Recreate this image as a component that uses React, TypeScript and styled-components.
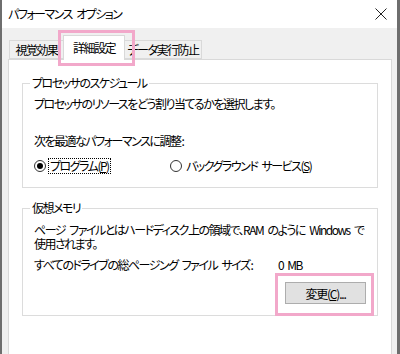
import React from 'react'
import styled, { createGlobalStyle } from 'styled-components'

const GlobalStyle = createGlobalStyle`
  body {
    margin: 0;
    font-family: "Noto Sans CJK JP", "Noto Sans", sans-serif;
    font-size: 12px;
    color: #000;
    font-feature-settings: "palt";
    letter-spacing: -1.5px;
    word-spacing: 3px;
  }
`

const Window = styled.div`
  width: 400px;
  height: 354px;
  box-sizing: border-box;
  background: #f0f0f0;
  border-left: 2px solid #6e6e6e;
  border-right: 3px solid #6e6e6e;
  display: flex;
  flex-direction: column;
  overflow: hidden;
`

const TitleBar = styled.div`
  height: 28px;
  flex: none;
  background: #fff;
  display: flex;
  align-items: center;
  justify-content: space-between;
  padding: 0 10px 0 6px;
`

const Title = styled.span`
  font-size: 12px;
  line-height: 16px;
`

const Body = styled.div`
  flex: 1;
  display: flex;
  flex-direction: column;
  padding: 7px 5px 0 6px;
`

const TabStrip = styled.div`
  display: flex;
  align-items: flex-end;
  height: 24px;
  padding-left: 1px;
  position: relative;
  z-index: 1;
`

const Tab = styled.div<{ $active?: boolean; $width: number }>`
  box-sizing: border-box;
  width: ${({ $width }) => $width}px;
  height: ${({ $active }) => ($active ? '25px' : '19px')};
  margin-bottom: ${({ $active }) => ($active ? '-1px' : '0')};
  background: ${({ $active }) => ($active ? '#fff' : '#f0f0f0')};
  border: 1px solid #d9d9d9;
  border-bottom: ${({ $active }) => ($active ? 'none' : '1px solid #d9d9d9')};
  margin-left: ${({ $active }) => ($active ? '-1px' : '0')};
  margin-right: ${({ $active }) => ($active ? '-1px' : '0')};
  display: flex;
  align-items: center;
  justify-content: center;
  line-height: 16px;
  white-space: nowrap;
  position: relative;
  ${({ $active }) =>
    $active &&
    `
    z-index: 2;
    &::after {
      content: '';
      position: absolute;
      left: -6px;
      right: -11px;
      top: -6px;
      bottom: -6px;
      border: 3px solid #f2a8ca;
    }
  `}
`

const Panel = styled.div`
  flex: 1;
  background: #fff;
  border: 1px solid #d9d9d9;
  border-bottom: none;
  padding: 15px 13px 0 13px;
`

const Group = styled.fieldset<{ $gap?: number }>`
  margin: ${({ $gap }) => $gap ?? 0}px 0 0 0;
  padding: 0 11px 0 11px;
  border: 1px solid #dcdcdc;
  min-width: 0;
`

const Legend = styled.legend`
  padding: 0 2px;
  margin-left: -4px;
  line-height: 16px;
`

const Line = styled.div<{ $top?: number }>`
  line-height: 16px;
  margin-top: ${({ $top }) => $top ?? 0}px;
  white-space: nowrap;
`

const Para = styled.div<{ $top?: number }>`
  line-height: 14px;
  margin-top: ${({ $top }) => $top ?? 0}px;
  white-space: nowrap;
`

const Colon = styled.span`
  letter-spacing: 0;
  margin-left: 1px;
`

const RadioRow = styled.div`
  display: flex;
  align-items: center;
  height: 16px;
  margin-top: 9px;
  margin-bottom: 13px;
`

const RadioItem = styled.label<{ $width?: number }>`
  display: flex;
  align-items: center;
  width: ${({ $width }) => ($width ? `${$width}px` : 'auto')};
  line-height: 16px;
`

const RadioCircle = styled.span<{ $checked?: boolean }>`
  box-sizing: border-box;
  width: 12px;
  height: 12px;
  border-radius: 50%;
  border: 1px solid #333;
  display: flex;
  align-items: center;
  justify-content: center;
  margin-right: 2px;
  &::after {
    content: '';
    width: 6px;
    height: 6px;
    border-radius: 50%;
    background: ${({ $checked }) => ($checked ? '#000' : 'transparent')};
  }
`

const RadioText = styled.span<{ $focused?: boolean }>`
  padding: 0 1px;
  border: 1px dotted ${({ $focused }) => ($focused ? '#000' : 'transparent')};
  line-height: 14px;
`

const SizeRow = styled.div`
  display: grid;
  grid-template-columns: 244px auto;
  line-height: 16px;
  margin-top: 6px;
  white-space: nowrap;
`

const ButtonRow = styled.div`
  display: flex;
  justify-content: flex-end;
  margin-top: 9px;
  margin-bottom: 11px;
`

const Button = styled.button`
  box-sizing: border-box;
  width: 81px;
  height: 22px;
  background: #e1e1e1;
  border: 1px solid #adadad;
  font: inherit;
  font-size: 12px;
  letter-spacing: -1.2px;
  color: #000;
  padding: 0;
  position: relative;
  &::after {
    content: '';
    position: absolute;
    left: -11px;
    right: -9px;
    top: -10px;
    bottom: -13px;
    border: 3px solid #f2a8ca;
  }
`

const CloseIcon = () => (
  <svg width="12" height="12" viewBox="0 0 12 12">
    <path d="M0.5 0.5 L11.5 11.5 M11.5 0.5 L0.5 11.5" stroke="#222" strokeWidth="1" fill="none" />
  </svg>
)

export default function App() {
  return (
    <>
      <GlobalStyle />
      <Window>
        <TitleBar>
          <Title>パフォーマンス オプション</Title>
          <CloseIcon />
        </TitleBar>
        <Body>
          <TabStrip>
            <Tab $width={55}>視覚効果</Tab>
            <Tab $active $width={62}>
              詳細設定
            </Tab>
            <Tab $width={78}>データ実行防止</Tab>
          </TabStrip>
          <Panel>
            <Group>
              <Legend>プロセッサのスケジュール</Legend>
              <Line $top={5}>プロセッサのリソースをどう割り当てるかを選択します。</Line>
              <Line $top={21}>
                次を最適なパフォーマンスに調整<Colon>:</Colon>
              </Line>
              <RadioRow>
                <RadioItem $width={136}>
                  <RadioCircle $checked />
                  <RadioText $focused>
                    プログラム(<u>P</u>)
                  </RadioText>
                </RadioItem>
                <RadioItem>
                  <RadioCircle />
                  <RadioText>
                    バックグラウンド サービス(<u>S</u>)
                  </RadioText>
                </RadioItem>
              </RadioRow>
            </Group>
            <Group $gap={12}>
              <Legend>仮想メモリ</Legend>
              <Para $top={7}>
                ページ ファイルとはハードディスク上の領域で、RAM のように Windows で
                <br />
                使用されます。
              </Para>
              <SizeRow>
                <span>
                  すべてのドライブの総ページング ファイル サイズ<Colon>:</Colon>
                </span>
                <span>0 MB</span>
              </SizeRow>
              <ButtonRow>
                <Button>
                  変更(<u>C</u>)...
                </Button>
              </ButtonRow>
            </Group>
          </Panel>
        </Body>
      </Window>
    </>
  )
}
